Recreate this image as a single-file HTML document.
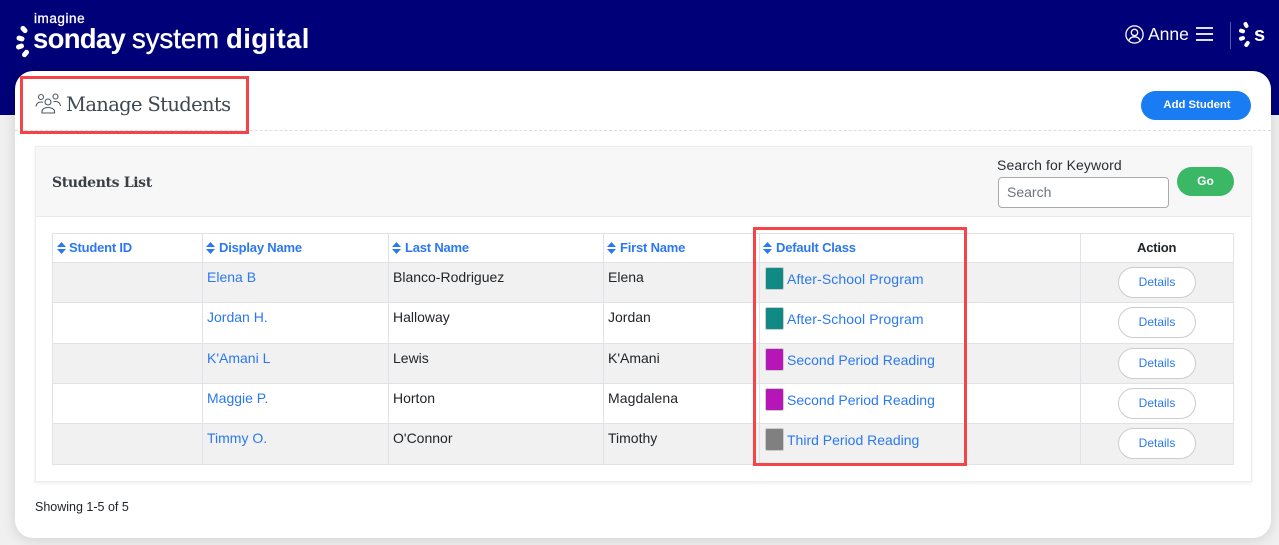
<!DOCTYPE html>
<html><head><meta charset="utf-8"><style>
*{box-sizing:border-box}
html,body{margin:0;padding:0;width:1279px;height:545px;overflow:hidden;background:#f0f0f0;font-family:"Liberation Sans",sans-serif;font-size:14px;color:#212529}
.a{position:absolute;white-space:nowrap}
.hd{left:0;top:0;width:1279px;height:115px;background:#000078}
.card{left:15px;top:71px;width:1256px;height:467px;background:#fff;border-radius:18px;box-shadow:0 2px 14px rgba(0,0,0,.13)}
.w{color:#fff}
.l{color:#2b78f0}
.red{border:3px solid #f54447;background:transparent}
.hl{background:#e0e2e8;height:2px;left:52px;width:1182px}
.vl{background:#e0e2e8;width:1px;top:233px;height:232px}
.row{background:#f1f1f1;left:53px;width:1180px}
.th{font-weight:bold;font-size:13px;color:#2b78f0;top:240px;letter-spacing:-.2px;line-height:16px}
.s{width:9px;height:12px;top:242px}
.sw{left:765px;width:19px;height:23px;border:1px solid #ccc;border-radius:2px}
.det{left:1118px;width:78px;height:31px;border:1px solid #ccc;border-radius:16px;background:#fff;color:#2b78f0;font-size:12px;text-align:center;line-height:29px}
.c{letter-spacing:.1px}
</style></head><body>
<div class="a hd"></div>
<div class="a w" style="left:34px;top:11px;font-size:13.5px;letter-spacing:.55px;-webkit-text-stroke:.3px #fff">imagine</div>
<svg class="a" style="left:14px;top:25px" width="18" height="34" viewBox="0 0 18 34"><g stroke="#fff" stroke-width="5" stroke-linecap="round"><path d="M9 3.400L11 5.600"/><path d="M5 13.100L8 13.900"/><path d="M4.500 22L7.500 21"/><path d="M10.500 29.700L12.500 27.300"/></g></svg>
<div class="a w" style="left:33px;top:22px;font-size:27.5px;font-weight:bold;line-height:34px;letter-spacing:-.7px">sonday</div>
<div class="a w" style="left:132px;top:22px;font-size:27.5px;line-height:34px;-webkit-text-stroke:.4px #fff">system</div>
<div class="a w" style="left:226px;top:22px;font-size:27.5px;font-weight:bold;line-height:34px;letter-spacing:.4px">digital</div>
<svg class="a" style="left:1125px;top:25px" width="19" height="19" viewBox="0 0 19 19" fill="none" stroke="#fff" stroke-width="1.3"><circle cx="9.5" cy="9.5" r="8.6"/><circle cx="9.5" cy="7.5" r="3.2"/><path d="M3.800 15.800c1-3 3-4 5.700-4s4.700 1 5.700 4"/></svg>
<div class="a w" style="left:1148px;top:24px;font-size:17.5px;line-height:21px">Anne</div>
<svg class="a" style="left:1196px;top:26px" width="17" height="16" viewBox="0 0 17 16" stroke="#fff" stroke-width="1.700"><path d="M0 2H17M0 8H17M0 14H17"/></svg>
<div class="a" style="left:1230px;top:22px;width:1px;height:27px;background:#5a5aa5"></div>
<svg class="a" style="left:1238px;top:20px" width="15" height="28" viewBox="0 0 15 28"><g stroke="#fff" stroke-width="4" stroke-linecap="round"><path d="M7.500 4L8.500 6"/><path d="M3 10.700L5 11.300"/><path d="M3 18.700L5 18"/><path d="M8.300 25L9.700 23"/></g></svg>
<div class="a w" style="left:1254px;top:23px;font-size:20px;font-weight:bold;line-height:24px">s</div>

<div class="a card"></div>
<div class="a" style="left:15px;top:130px;width:1256px;border-top:1px dashed #ddd"></div>
<svg class="a" style="left:35px;top:92px" width="26" height="22" viewBox="0 0 26 22" fill="none" stroke="#4b5563" stroke-width="1.100"><circle cx="6" cy="5" r="2.500"/><circle cx="13" cy="10" r="3"/><circle cx="20.500" cy="4.500" r="2.500"/><path d="M1 14.500c.5-3 2-4.500 5-4.500 1 0 1.500.1 2 .4M25.500 14c-.5-3-2-4.500-5-4.500-1 0-1.500.1-2 .4"/><path d="M7 21v-1.500c0-2.500 2.500-4 6-4s6.500 1.500 6.500 4V21z"/></svg>
<div class="a" style="left:66px;top:92px;font-family:'DejaVu Serif',serif;font-size:19.5px;color:#3f4750;line-height:25px;letter-spacing:-.65px">Manage Students</div>
<div class="a red" style="left:20px;top:76px;width:229px;height:58px"></div>
<div class="a w" style="left:1142px;top:91px;width:110px;height:29px;border-radius:15px;font-size:11.3px;font-weight:bold;text-align:center;line-height:28px;z-index:2">Add Student</div>
<div class="a" style="left:1141px;top:91px;width:110px;height:29px;border-radius:15px;background:#1a7cf2"></div>

<div class="a" style="left:35px;top:146px;width:1217px;height:336px;background:#fff;border:1px solid #eee;box-shadow:0 1px 3px rgba(0,0,0,.08)"></div>
<div class="a" style="left:36px;top:147px;width:1215px;height:70px;background:#f7f7f7;border-bottom:1px solid #e9e9e9"></div>
<div class="a" style="left:52px;top:174px;font-family:'DejaVu Serif',serif;font-weight:bold;font-size:14px;color:#3a3f44;line-height:19px;letter-spacing:-.35px">Students List</div>
<div class="a c" style="left:997px;top:157px;font-size:14px;line-height:16px;color:#2a2f35">Search for Keyword</div>
<div class="a" style="left:998px;top:177px;width:171px;height:31px;background:#fff;border:1px solid #aaa;border-radius:4px;padding-left:8px;line-height:29px;color:#6c757d;font-size:14px">Search</div>
<div class="a w" style="left:1177px;top:167px;width:57px;height:29px;border-radius:15px;background:#3bb866;font-size:12px;font-weight:bold;text-align:center;line-height:28px">Go</div>

<div class="a row" style="top:263px;height:39px"></div>
<div class="a row" style="top:344px;height:39px"></div>
<div class="a row" style="top:424px;height:40px"></div>
<div class="a hl" style="top:233px;height:1px"></div>
<div class="a hl" style="top:262px;height:1px"></div>
<div class="a hl" style="top:302px;height:1px"></div>
<div class="a hl" style="top:343px;height:1px"></div>
<div class="a hl" style="top:383px;height:1px"></div>
<div class="a hl" style="top:423px;height:1px"></div>
<div class="a hl" style="top:464px;height:1px"></div>
<div class="a vl" style="left:52px"></div>
<div class="a vl" style="left:202px"></div>
<div class="a vl" style="left:388px"></div>
<div class="a vl" style="left:603px"></div>
<div class="a vl" style="left:759px"></div>
<div class="a vl" style="left:1080px"></div>
<div class="a vl" style="left:1233px"></div>

<svg width="0" height="0" style="position:absolute"><defs><symbol id="so" viewBox="0 0 9 12"><path d="M4.500 0L9 5H0zM4.500 12L0 7H9z" fill="#2b78f0"/></symbol></defs></svg>
<svg class="a s" style="left:57px"><use href="#so"/></svg><div class="a th" style="left:69px">Student ID</div>
<svg class="a s" style="left:206px"><use href="#so"/></svg><div class="a th" style="left:219px">Display Name</div>
<svg class="a s" style="left:392px"><use href="#so"/></svg><div class="a th" style="left:405px">Last Name</div>
<svg class="a s" style="left:607px"><use href="#so"/></svg><div class="a th" style="left:620px">First Name</div>
<svg class="a s" style="left:763px"><use href="#so"/></svg><div class="a th" style="left:776px">Default Class</div>
<div class="a th" style="left:1137px;color:#212529">Action</div>

<div class="a l" style="left:207px;top:269px">Elena B</div>
<div class="a" style="left:393px;top:269px">Blanco-Rodriguez</div>
<div class="a" style="left:608px;top:269px">Elena</div>
<div class="a l" style="left:207px;top:309px">Jordan H.</div>
<div class="a" style="left:393px;top:309px">Halloway</div>
<div class="a" style="left:608px;top:309px">Jordan</div>
<div class="a l" style="left:207px;top:350px">K'Amani L</div>
<div class="a" style="left:393px;top:350px">Lewis</div>
<div class="a" style="left:608px;top:350px">K'Amani</div>
<div class="a l" style="left:207px;top:390px">Maggie P.</div>
<div class="a" style="left:393px;top:390px">Horton</div>
<div class="a c" style="left:608px;top:390px">Magdalena</div>
<div class="a l" style="left:207px;top:430px">Timmy O.</div>
<div class="a" style="left:393px;top:430px">O'Connor</div>
<div class="a" style="left:608px;top:430px">Timothy</div>

<div class="a sw" style="top:267px;background:#0f8a84"></div><div class="a l c" style="left:787px;top:271px">After-School Program</div>
<div class="a sw" style="top:307px;background:#0f8a84"></div><div class="a l c" style="left:787px;top:311px">After-School Program</div>
<div class="a sw" style="top:348px;background:#b516b5"></div><div class="a l" style="left:787px;top:352px">Second Period Reading</div>
<div class="a sw" style="top:388px;background:#b516b5"></div><div class="a l" style="left:787px;top:392px">Second Period Reading</div>
<div class="a sw" style="top:428px;background:#808080"></div><div class="a l" style="left:787px;top:432px">Third Period Reading</div>

<div class="a det" style="top:267px">Details</div>
<div class="a det" style="top:307px">Details</div>
<div class="a det" style="top:348px">Details</div>
<div class="a det" style="top:388px">Details</div>
<div class="a det" style="top:428px">Details</div>

<div class="a red" style="left:753px;top:227px;width:214px;height:239px"></div>
<div class="a" style="left:35px;top:500px;font-size:12.5px;line-height:15px">Showing 1-5 of 5</div>
</body></html>
